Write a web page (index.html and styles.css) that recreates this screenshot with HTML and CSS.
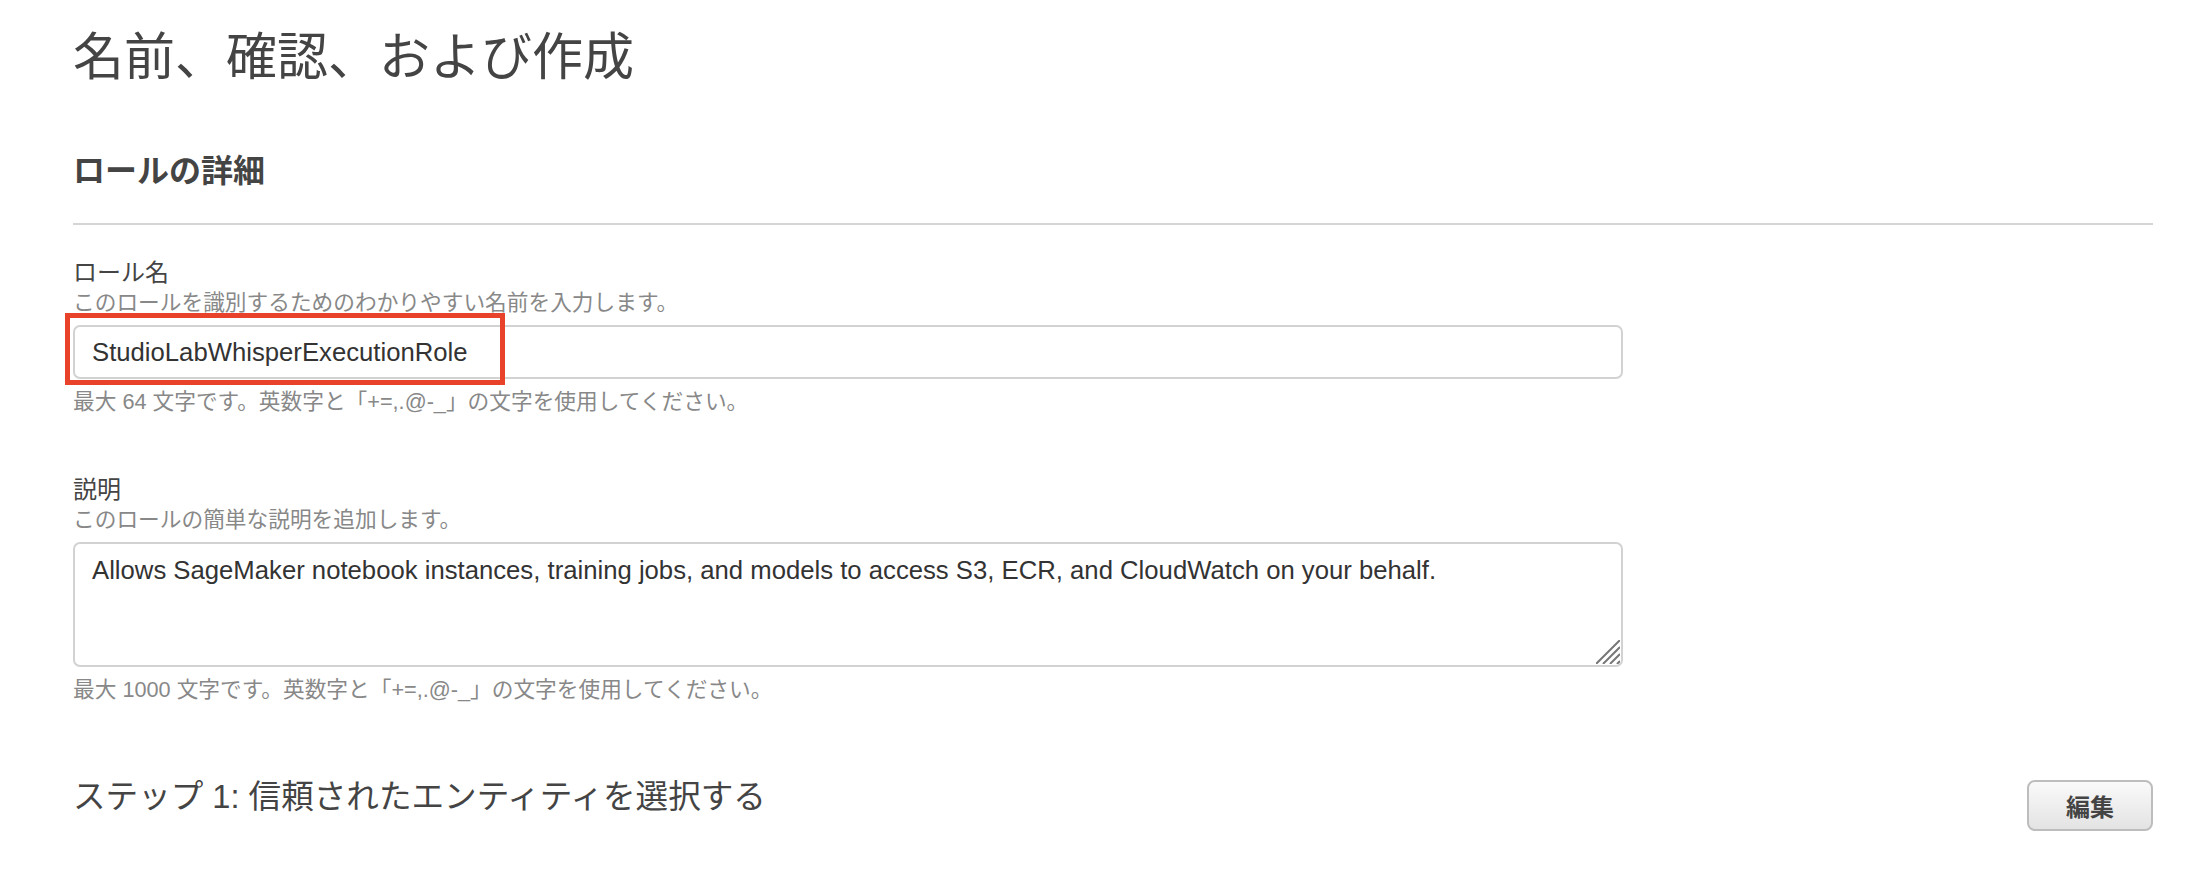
FILE: index.html
```html
<!DOCTYPE html>
<html lang="ja">
<head>
<meta charset="utf-8">
<title>名前、確認、および作成</title>
<link rel="stylesheet" href="styles.css">
</head>
<body>
<main class="page">
  <h1 class="page-title">名前、確認、および作成</h1>

  <section class="section">
    <h2 class="section-title">ロールの詳細</h2>
    <hr class="divider">

    <div class="field">
      <label class="field-label" for="role-name">ロール名</label>
      <div class="field-desc">このロールを識別するためのわかりやすい名前を入力します。</div>
      <div class="control">
        <input id="role-name" class="text-input" type="text" value="StudioLabWhisperExecutionRole">
        <span class="highlight"></span>
      </div>
      <div class="field-hint">最大 64 文字です。英数字と「+=,.@-_」の文字を使用してください。</div>
    </div>

    <div class="field field-second">
      <label class="field-label" for="role-desc">説明</label>
      <div class="field-desc">このロールの簡単な説明を追加します。</div>
      <div class="control">
        <textarea id="role-desc" class="text-area">Allows SageMaker notebook instances, training jobs, and models to access S3, ECR, and CloudWatch on your behalf.</textarea>
        <svg class="resize-grip" width="24" height="24" viewBox="0 0 24 24" aria-hidden="true">
          <path d="M0 24 L24 0 M7 24 L24 7 M14 24 L24 14 M21 24 L24 21" stroke="#777" stroke-width="2" fill="none"/>
        </svg>
      </div>
      <div class="field-hint">最大 1000 文字です。英数字と「+=,.@-_」の文字を使用してください。</div>
    </div>
  </section>

  <section class="step-row">
    <h2 class="step-title">ステップ 1: 信頼されたエンティティを選択する</h2>
    <button class="edit-btn" type="button">編集</button>
  </section>
</main>
</body>
</html>
```

FILE: styles.css
```css
* {
  box-sizing: border-box;
}

html, body {
  margin: 0;
  padding: 0;
  background: #ffffff;
}

body {
  font-family: "Liberation Sans", "Noto Sans CJK JP", sans-serif;
  color: #444444;
}

.page {
  padding: 28px 49px 0 73px;
}

.page-title {
  margin: 0;
  font-size: 51px;
  line-height: 60px;
  font-weight: 400;
  color: #444444;
}

.section {
  margin-top: 63px;
}

.section-title {
  margin: 0;
  font-size: 32px;
  line-height: 40px;
  font-weight: 700;
  color: #444444;
}

.divider {
  margin: 32px 0 0 0;
  border: 0;
  height: 2px;
  background: #d5d5d5;
}

.field {
  margin-top: 32px;
  display: flex;
  flex-direction: column;
}

.field-second {
  margin-top: 57px;
}

.field-label {
  font-size: 24px;
  line-height: 31px;
  color: #444444;
}

.field-desc {
  font-size: 21.7px;
  line-height: 30px;
  color: #888888;
}

.control {
  position: relative;
  margin-top: 7px;
  width: 1550px;
}

.text-input,
.text-area {
  display: block;
  width: 100%;
  font-family: "Liberation Sans", "Noto Sans CJK JP", sans-serif;
  font-size: 25.7px;
  color: #333333;
  background: #ffffff;
  border: 2px solid #d2d2d2;
  border-radius: 7px;
  outline: none;
  margin: 0;
}

.text-input {
  height: 54px;
  padding: 0 17px;
}

.text-area {
  height: 125px;
  padding: 11px 17px 9px;
  line-height: 30px;
  resize: none;
}

.highlight {
  position: absolute;
  left: -8px;
  top: -12px;
  width: 440px;
  height: 72px;
  border: 5px solid #e8432a;
  pointer-events: none;
}

.resize-grip {
  position: absolute;
  right: 3px;
  bottom: 3px;
}

.field-hint {
  margin-top: 8px;
  font-size: 21.7px;
  line-height: 30px;
  color: #888888;
}

.step-row {
  margin-top: 72px;
  display: flex;
  justify-content: space-between;
  align-items: flex-start;
}

.step-title {
  margin: 0;
  font-size: 32.6px;
  line-height: 40px;
  font-weight: 400;
  color: #444444;
}

.edit-btn {
  margin-top: 3px;
  width: 126px;
  height: 51px;
  font-family: "Liberation Sans", "Noto Sans CJK JP", sans-serif;
  font-size: 24px;
  font-weight: 700;
  color: #444444;
  background: linear-gradient(#fafafa, #e3e3e3);
  border: 2px solid #bdbdbd;
  border-radius: 8px;
  padding: 0;
}
```
